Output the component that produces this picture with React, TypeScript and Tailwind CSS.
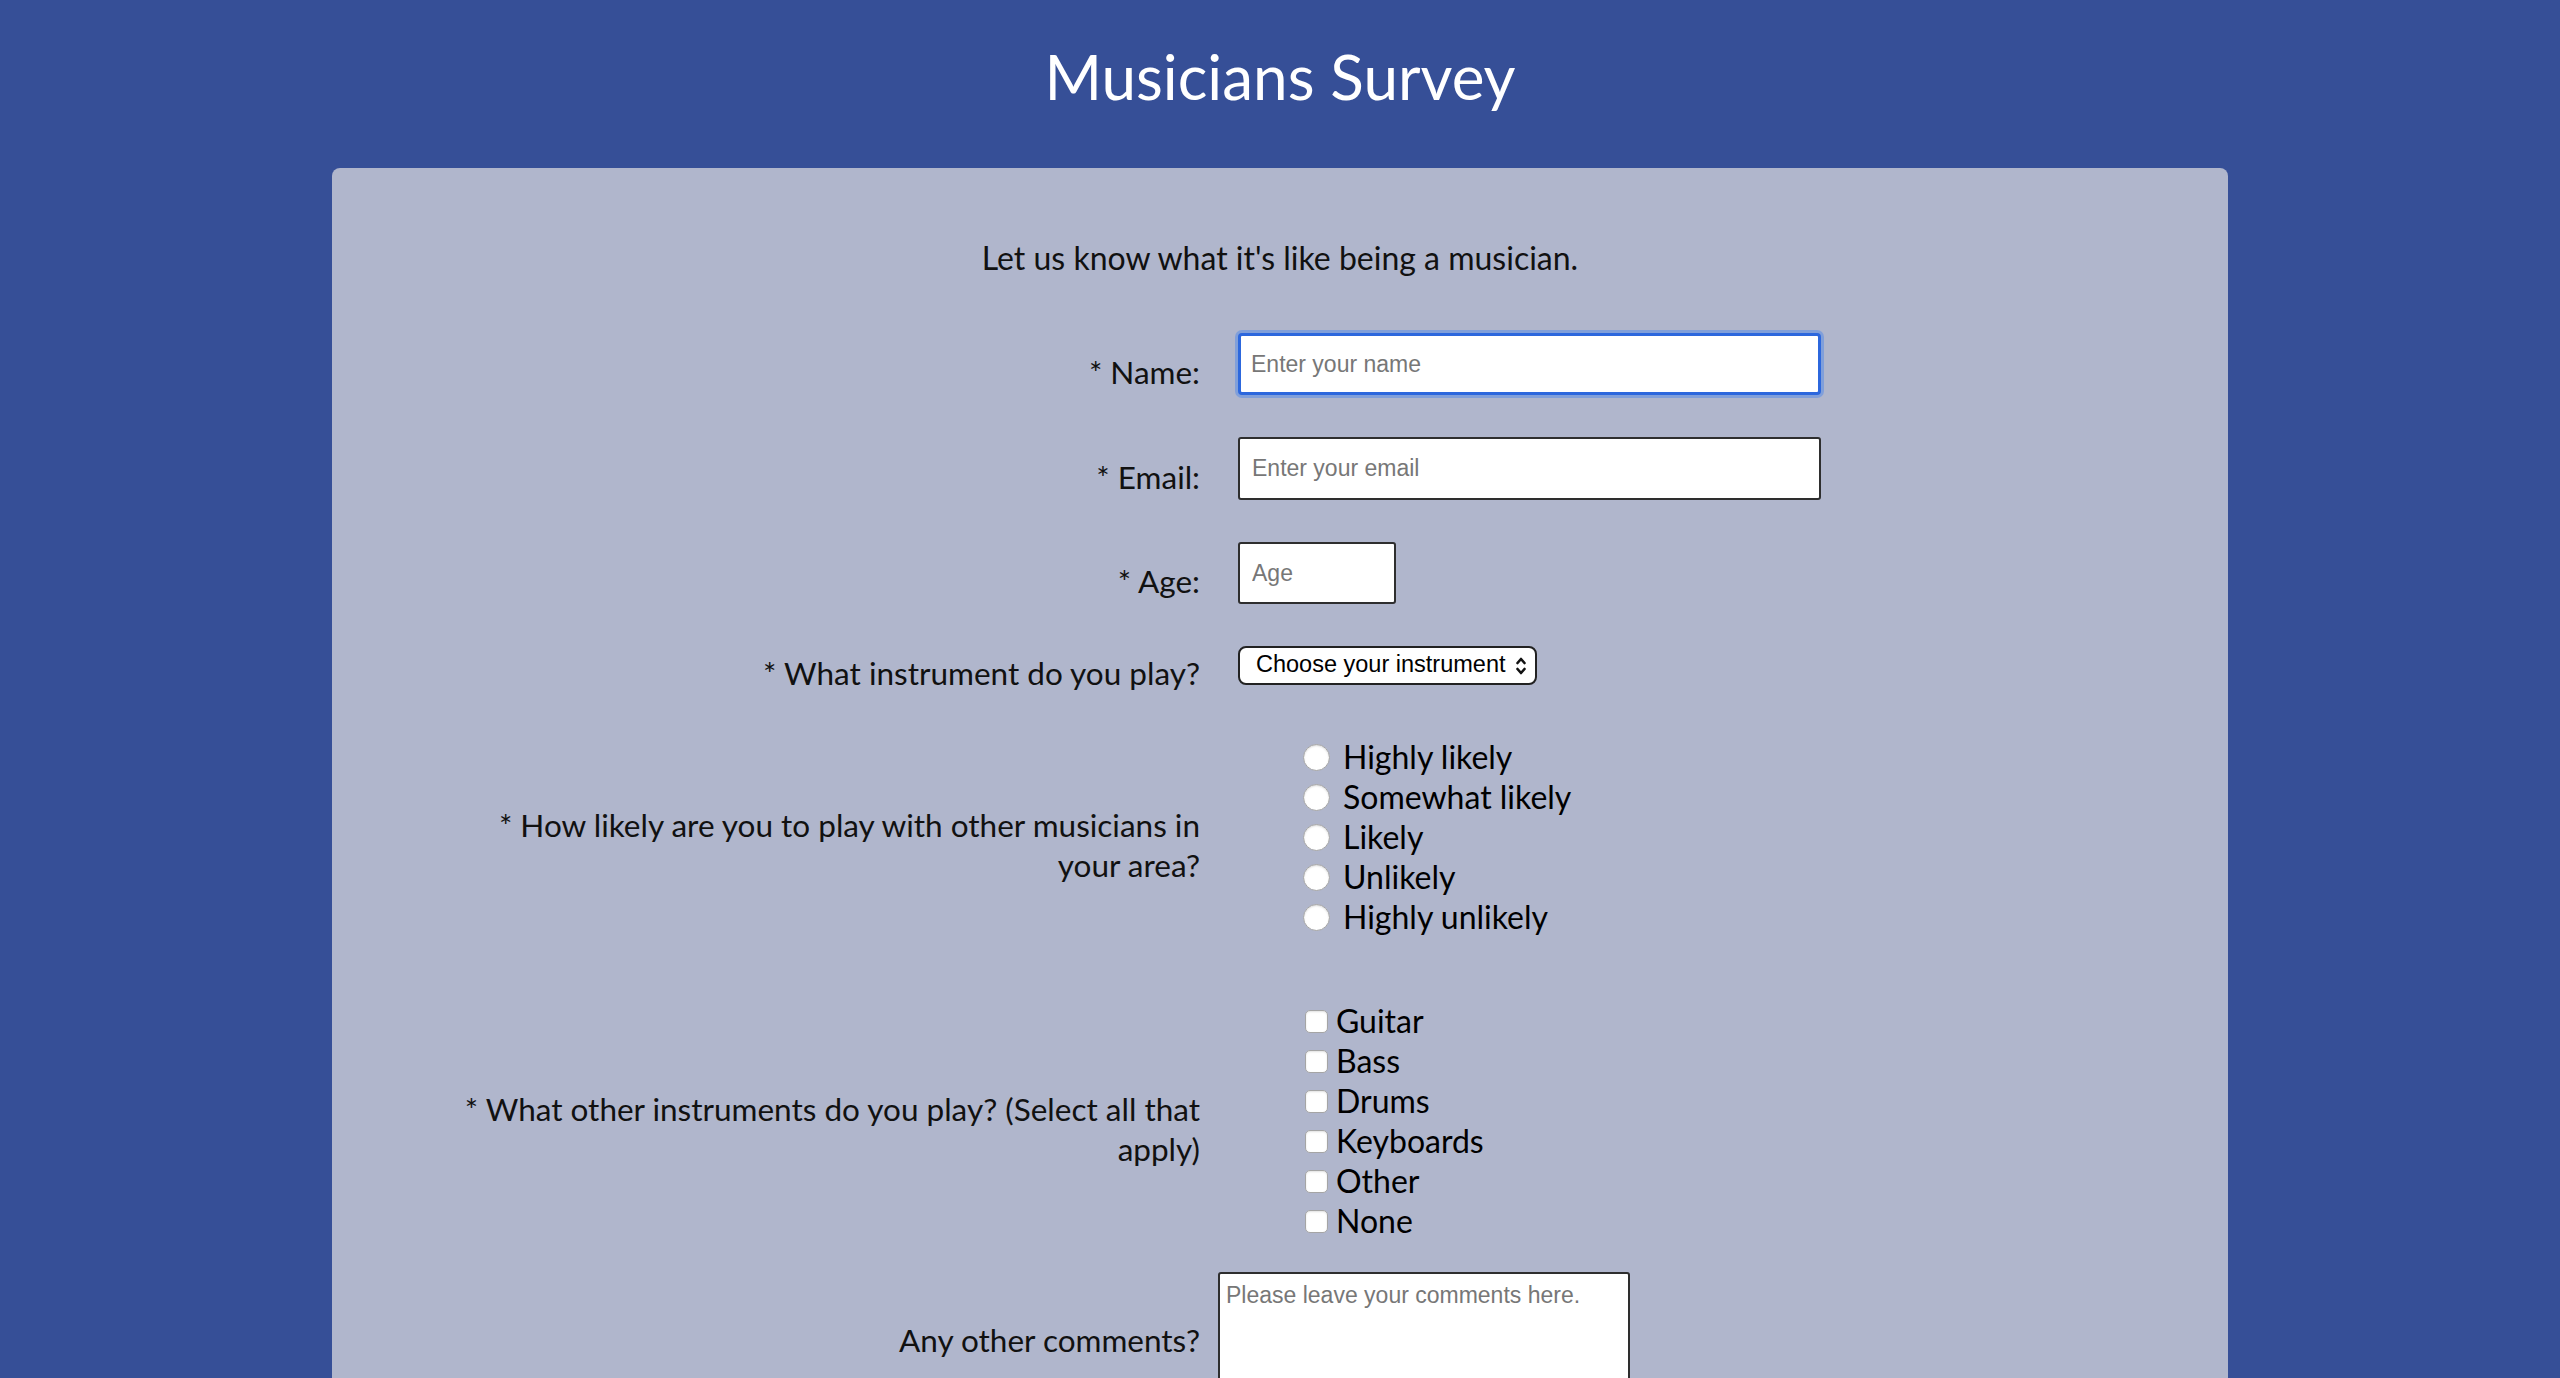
import React from "react";

const radios = ["Highly likely", "Somewhat likely", "Likely", "Unlikely", "Highly unlikely"];
const others = ["Guitar", "Bass", "Drums", "Keyboards", "Other", "None"];

const Row: React.FC<{ label: React.ReactNode; className?: string; children: React.ReactNode }> = ({
  label,
  className,
  children,
}) => {
  return (
    <div className={`flex items-center ${className ?? ""}`}>
      <label className="w-[868px] shrink-0 translate-y-2 pl-[110px] text-right text-[31.5px] leading-[40px] text-[#111]">
        {label}
      </label>
      <div className="pl-[38px]">{children}</div>
    </div>
  );
};

export default function App() {
  return (
    <div className="min-h-screen bg-[#364f97] font-['Lato','Open_Sans',sans-serif] pb-24">
      <header className="pt-[38px] pb-[53px] text-center">
        <h1 className="text-[62px] leading-[77px] font-normal text-white">Musicians Survey</h1>
      </header>

      <form className="mx-auto w-[1896px] rounded-[8px] bg-[#b0b6cc] pt-[70px] pb-20">
        <p className="text-center text-[32px] leading-[40px] text-[#111]">
          Let us know what it's like being a musician.
        </p>

        <Row label="* Name:" className="mt-[55px]">
          <input
            type="text"
            placeholder="Enter your name"
            className="h-[62px] w-[583px] rounded-[4px] border-[3px] border-[#2c67dd] bg-white px-[10px] font-['Liberation_Sans',sans-serif] text-[23px] shadow-[0_0_0_3px_rgba(90,140,230,0.55)] outline-none placeholder:text-[#777]"
          />
        </Row>

        <Row label="* Email:" className="mt-[42px]">
          <input
            type="email"
            placeholder="Enter your email"
            className="h-[63px] w-[583px] rounded-[3px] border-2 border-[#2e2e2e] bg-white px-[12px] font-['Liberation_Sans',sans-serif] text-[23px] outline-none placeholder:text-[#777]"
          />
        </Row>

        <Row label="* Age:" className="mt-[42px]">
          <input
            type="number"
            placeholder="Age"
            className="h-[62px] w-[158px] rounded-[3px] border-2 border-[#2e2e2e] bg-white px-[12px] font-['Liberation_Sans',sans-serif] text-[23px] outline-none placeholder:text-[#777]"
          />
        </Row>

        <Row label="* What instrument do you play?" className="mt-[41px]">
          <div className="relative w-[299px]">
            <select
              defaultValue=""
              className="h-[39px] w-[299px] appearance-none rounded-[8px] border-2 border-[#222] bg-white pl-[16px] font-['Liberation_Sans',sans-serif] text-[23.5px] leading-none text-black outline-none"
            >
              <option value="" disabled>
                Choose your instrument
              </option>
              <option>Guitar</option>
              <option>Bass</option>
              <option>Drums</option>
              <option>Keyboards</option>
            </select>
            <svg
              className="pointer-events-none absolute right-[10px] top-[9px]"
              width="12"
              height="22"
              viewBox="0 0 12 22"
              fill="none"
              stroke="#111"
              strokeWidth="2.6"
              strokeLinecap="round"
              strokeLinejoin="round"
            >
              <path d="M2.5 8 L6 4 L9.5 8" />
              <path d="M2.5 14 L6 18 L9.5 14" />
            </svg>
          </div>
        </Row>

        <Row label="* How likely are you to play with other musicians in your area?" className="mt-[52px]">
          <div className="flex flex-col pl-[65px]">
            {radios.map((r) => (
              <label key={r} className="flex h-[40px] items-center text-[32px] text-black">
                <input
                  type="radio"
                  name="likely"
                  className="mr-[13px] h-[27px] w-[27px] appearance-none rounded-full border border-[#a5a5a5] bg-white shadow-[inset_0_1px_2px_rgba(0,0,0,0.15)]"
                />
                {r}
              </label>
            ))}
          </div>
        </Row>

        <Row label="* What other instruments do you play? (Select all that apply)" className="mt-[64px]">
          <div className="flex flex-col pl-[67px]">
            {others.map((o) => (
              <label key={o} className="flex h-[40px] items-center text-[32px] text-black">
                <input
                  type="checkbox"
                  className="mr-[8px] h-[23px] w-[23px] appearance-none rounded-[5px] border border-[#a5a5a5] bg-white shadow-[inset_0_1px_2px_rgba(0,0,0,0.12)]"
                />
                {o}
              </label>
            ))}
          </div>
        </Row>

        <div className="mt-[31px] flex items-center">
          <label className="w-[868px] shrink-0 translate-y-2 pl-[110px] text-right text-[31.5px] leading-[40px] text-[#111]">
            Any other comments?
          </label>
          <div className="pl-[18px]">
            <textarea
              placeholder="Please leave your comments here."
              className="block h-[120px] w-[412px] resize-none rounded-[3px] border-2 border-[#2e2e2e] bg-white px-[6px] py-[4px] font-['Liberation_Sans',sans-serif] text-[23px] outline-none placeholder:text-[#777]"
            />
          </div>
        </div>

        <div className="mt-10 text-center">
          <button
            type="submit"
            className="rounded-[8px] bg-[#364f97] px-10 py-3 text-[32px] text-white"
          >
            Submit
          </button>
        </div>
      </form>
    </div>
  );
}
